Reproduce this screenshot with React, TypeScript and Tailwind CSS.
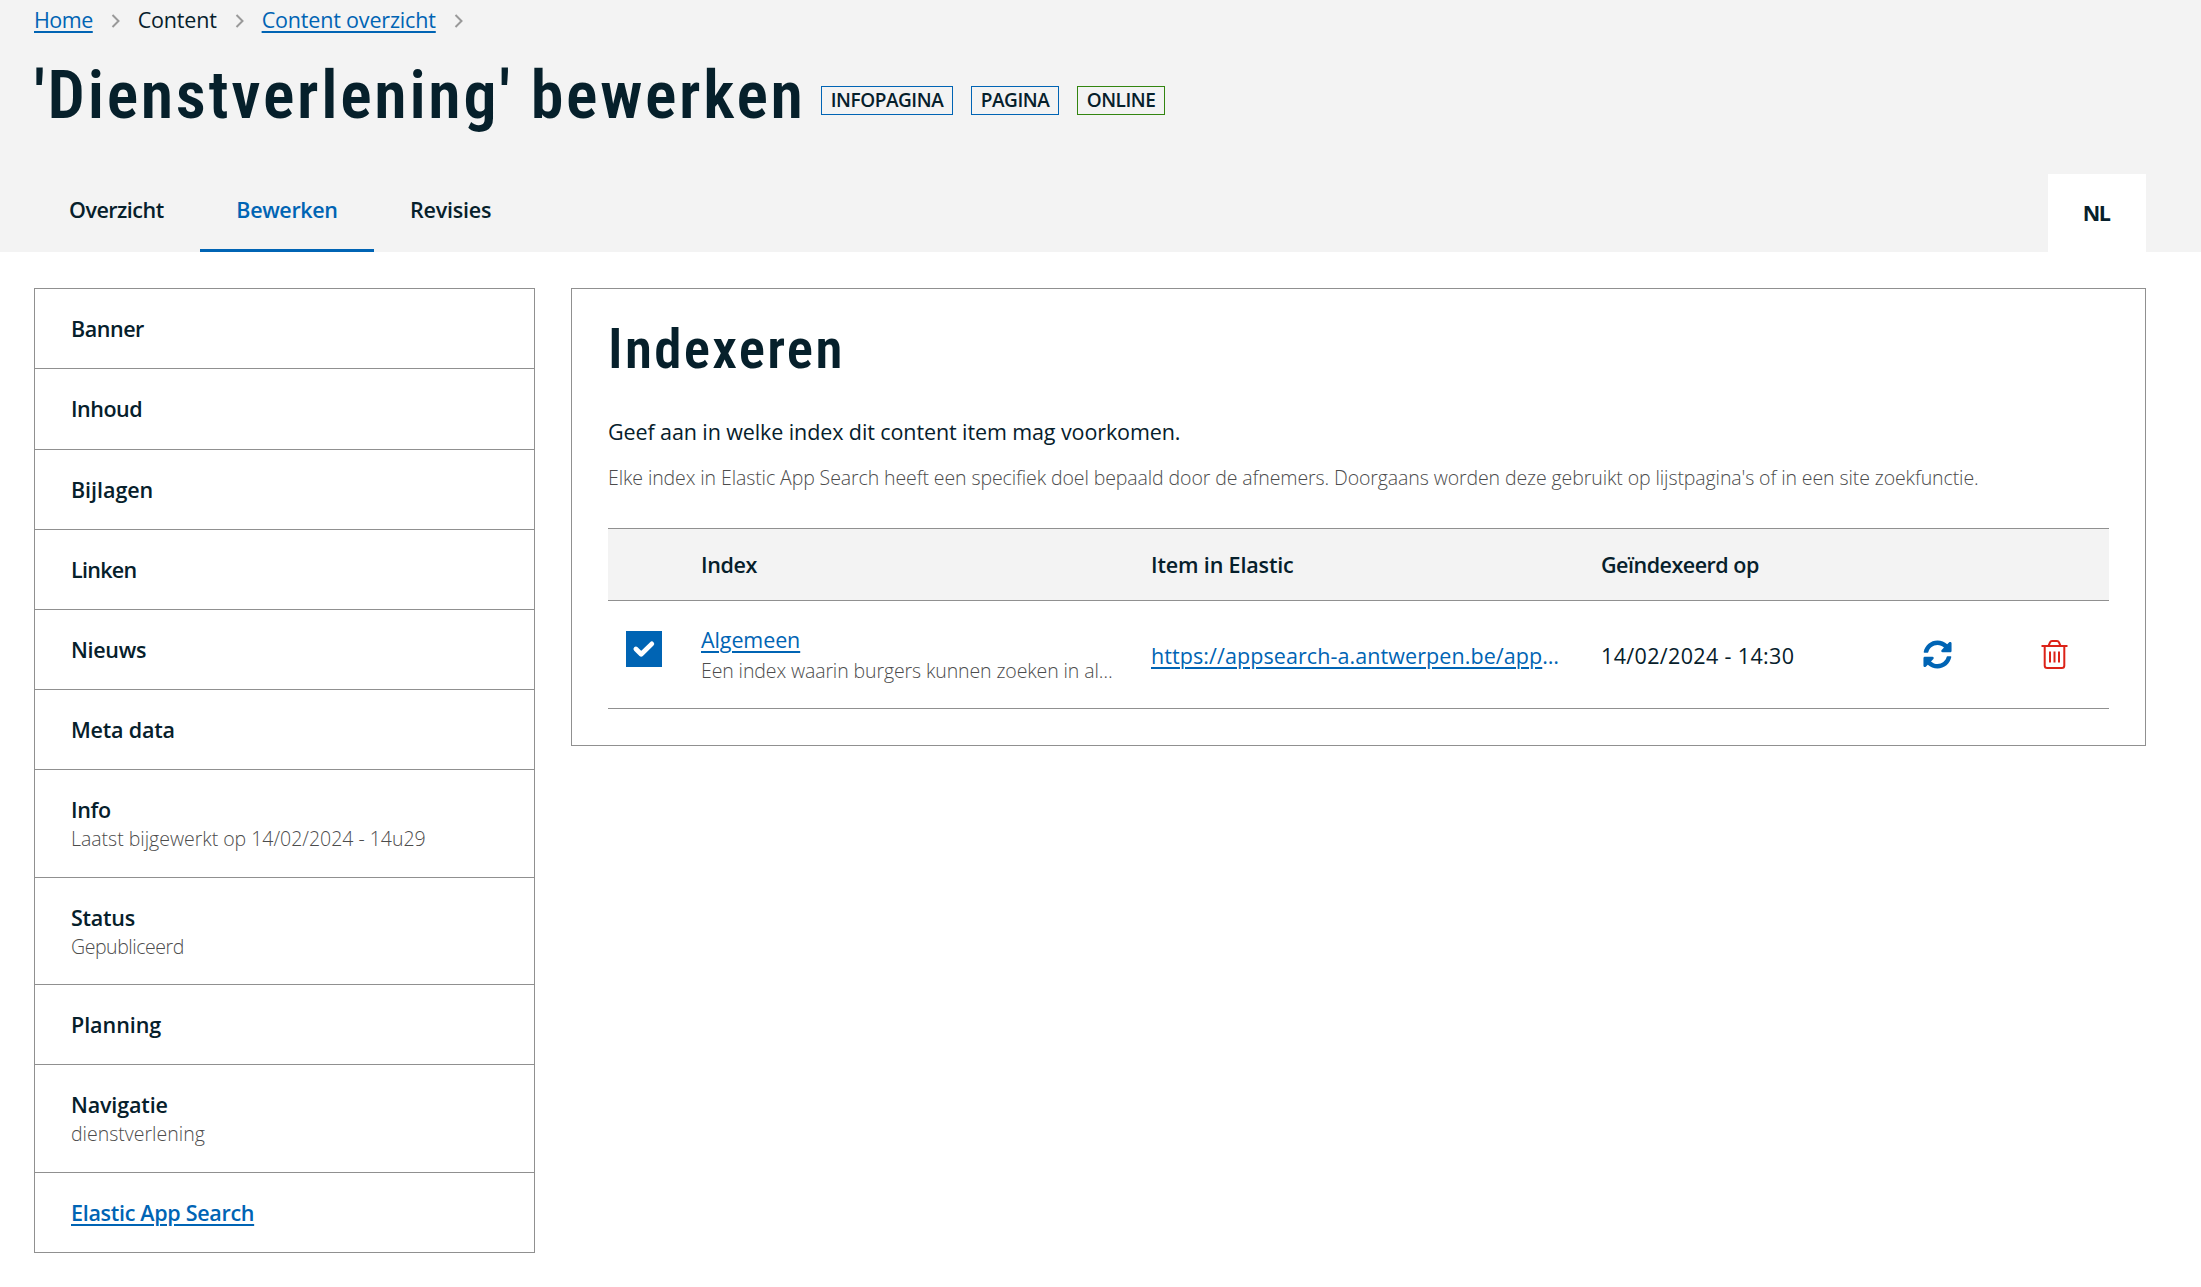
import type { ReactNode } from "react";
import { FaSyncAlt } from "react-icons/fa";

const body = "font-['Open_Sans',sans-serif] text-[21.5px] leading-[30px]";
const strong = "font-['Open_Sans',sans-serif] text-[21.5px] leading-[27px] font-semibold";
const small = "font-['Open_Sans',sans-serif] text-[19.5px] leading-[30px] font-light text-[#4c4c4c]";
const heading = "font-['Roboto',sans-serif] font-semibold whitespace-nowrap [font-stretch:75%]";
const link = "text-[#0064b4] underline decoration-2 underline-offset-[3px]";

function Chevron({ className = "" }: { className?: string }) {
  return (
    <svg className={`mt-[1px] mr-[18px] ml-[18px] h-[14px] w-[9px] ${className}`} viewBox="0 0 9 14" fill="none">
      <path d="M1.5 1L7.5 7L1.5 13" stroke="#999999" strokeWidth="2" />
    </svg>
  );
}

function Breadcrumbs() {
  return (
    <nav className={`flex items-center ${body}`}>
      <a className={`tracking-[-0.5px] ${link}`}>Home</a>
      <Chevron className="ml-[17px]" />
      <span className="tracking-[-0.2px]">Content</span>
      <Chevron className="ml-[17px]" />
      <a className={`tracking-[-0.17px] ${link}`}>Content overzicht</a>
      <Chevron className="ml-[17px]" />
    </nav>
  );
}

function Tag({ children, className }: { children: ReactNode; className: string }) {
  return (
    <span
      className={`h-[29px] border text-center font-['Open_Sans',sans-serif] text-[19px] leading-[26px] font-semibold tracking-[-0.45px] ${className}`}
    >
      {children}
    </span>
  );
}

type Section = { label: string; note?: string; active?: boolean; height: string; tracking: string; noteTracking?: string };

const sections: Section[] = [
  { label: "Banner", height: "h-[80px]", tracking: "tracking-[-0.45px]" },
  { label: "Inhoud", height: "h-[81px]", tracking: "tracking-[-0.5px]" },
  { label: "Bijlagen", height: "h-[80px]", tracking: "tracking-[-0.05px]" },
  { label: "Linken", height: "h-[80px]", tracking: "tracking-[-0.7px]" },
  { label: "Nieuws", height: "h-[80px]", tracking: "tracking-[-0.3px]" },
  { label: "Meta data", height: "h-[80px]", tracking: "tracking-[-0.2px]" },
  {
    label: "Info",
    note: "Laatst bijgewerkt op 14/02/2024 - 14u29",
    height: "h-[108px]",
    tracking: "tracking-[-0.3px]",
    noteTracking: "tracking-[-0.02px]",
  },
  {
    label: "Status",
    note: "Gepubliceerd",
    height: "h-[107px]",
    tracking: "tracking-[-0.25px]",
    noteTracking: "tracking-[-0.45px]",
  },
  { label: "Planning", height: "h-[80px]", tracking: "tracking-[-0.05px]" },
  {
    label: "Navigatie",
    note: "dienstverlening",
    height: "h-[108px]",
    tracking: "tracking-[-0.15px]",
    noteTracking: "tracking-normal",
  },
  { label: "Elastic App Search", active: true, height: "h-[80px]", tracking: "tracking-[-0.3px]" },
];

function Sidebar() {
  return (
    <aside className="w-[501px] shrink-0 border border-b-0 border-[#909090]">
      {sections.map(({ label, note, active, height, tracking, noteTracking }) => (
        <div key={label} className={`border-b border-[#909090] px-[36px] pt-[26px] ${height}`}>
          <div className={`${strong} ${tracking}`}>
            <span className={active ? link : ""}>{label}</span>
          </div>
          {note && <div className={`mt-[1px] ${small} ${noteTracking}`}>{note}</div>}
        </div>
      ))}
    </aside>
  );
}

function TrashIcon() {
  return (
    <svg className="h-[29px] w-[27px]" viewBox="0 0 27 29" fill="none" stroke="#dc2318" strokeWidth="2">
      <path d="M0.5 6H26.5" />
      <path d="M7.5 6L9 2.4Q9.6 1 11 1H16Q17.4 1 18 2.4L19.5 6" />
      <path d="M3.7 6V25.5Q3.7 28 6.2 28H20.8Q23.3 28 23.3 25.5V6" />
      <path d="M9 11.5V22.5M13.5 11.5V22.5M18 11.5V22.5" />
    </svg>
  );
}

const columns = "grid grid-cols-[75px_450px_450px_292px_124px_110px]";

function IndexTable() {
  return (
    <div className="mt-[35px] border-t border-[#909090]">
      <div className={`h-[72px] items-center border-b border-[#909090] bg-[#f3f3f3] ${columns} ${strong}`}>
        <div />
        <div className="px-[18px] tracking-[-0.35px]">Index</div>
        <div className="px-[18px] tracking-[-0.15px]">Item in Elastic</div>
        <div className="px-[18px] tracking-[-0.5px]">Geïndexeerd op</div>
      </div>
      <div className={`h-[108px] items-center border-b border-[#909090] ${columns} ${body}`}>
        <div className="px-[18px]">
          <div className="mb-[11px] flex size-[36px] items-center justify-center bg-[#0064b4]">
            <svg className="h-[18px] w-[24px]" viewBox="0 0 24 18" fill="none">
              <path
                d="M3.9 9L9.2 14.2L19.8 3.9"
                stroke="#fff"
                strokeWidth="4.8"
                strokeLinecap="round"
                strokeLinejoin="round"
              />
            </svg>
          </div>
        </div>
        <div className="px-[18px] pt-[2px] whitespace-nowrap">
          <div>
            <a className={`tracking-[-0.1px] ${link}`}>Algemeen</a>
          </div>
          <div className={`mt-[1px] tracking-[-0.11px] ${small}`}>Een index waarin burgers kunnen zoeken in al…</div>
        </div>
        <div className="px-[18px] pt-[2px] whitespace-nowrap text-[#0064b4]">
          <a className={`tracking-[0.08px] ${link}`}>https://appsearch-a.antwerpen.be/app</a>…
        </div>
        <div className="px-[18px] pt-[2px] tracking-[0.35px]">14/02/2024 - 14:30</div>
        <div className="flex justify-center">
          <FaSyncAlt className="size-[29px] text-[#0064b4]" />
        </div>
        <div className="flex justify-center">
          <TrashIcon />
        </div>
      </div>
    </div>
  );
}

export default function App() {
  return (
    <div className="min-h-screen bg-white text-[#06202b]">
      <header className="h-[252px] bg-[#f3f3f3] pt-[5px] pr-[55px] pl-[34px]">
        <Breadcrumbs />
        <div className="mt-[21px] flex">
          <h1 className={`w-[787px] text-[66px] leading-[80px] tracking-[2.7px] ${heading}`}>
            'Dienstverlening' bewerken
          </h1>
          <div className="mt-[30px] flex gap-[18px]">
            <Tag className="w-[132px] border-[#0064b4]">INFOPAGINA</Tag>
            <Tag className="w-[88px] border-[#0064b4]">PAGINA</Tag>
            <Tag className="w-[88px] border-[#32850f]">ONLINE</Tag>
          </div>
        </div>
        <div className="mt-[38px] flex h-[78px] justify-between">
          <nav className={`flex ${strong}`}>
            <a className="w-[166px] pt-[22px] pl-[35px] tracking-[-0.5px]">Overzicht</a>
            <a className="w-[174px] border-b-3 border-[#0064b4] pt-[22px] text-center tracking-[-0.35px] text-[#0064b4]">
              Bewerken
            </a>
            <a className="pt-[22px] pl-[36px] tracking-[-0.2px]">Revisies</a>
          </nav>
          <div className="w-[98px] bg-white pt-[25px] pr-[2px] text-center font-['Open_Sans',sans-serif] text-[21.5px] leading-[27px] font-bold tracking-[-1.5px]">
            NL
          </div>
        </div>
      </header>
      <main className="flex items-start gap-[36px] pt-[36px] pr-[55px] pl-[34px]">
        <Sidebar />
        <section className="flex-1 border border-[#909090] p-[36px]">
          <h2 className={`text-[55px] leading-[48px] tracking-[2.3px] ${heading}`}>Indexeren</h2>
          <p className={`mt-[44px] tracking-[-0.1px] ${body}`}>
            Geef aan in welke index dit content item mag voorkomen.
          </p>
          <p className={`mt-[16px] tracking-[-0.1px] whitespace-nowrap ${small}`}>
            Elke index in Elastic App Search heeft een specifiek doel bepaald door de afnemers. Doorgaans worden deze
            gebruikt op lijstpagina's of in een site zoekfunctie.
          </p>
          <IndexTable />
        </section>
      </main>
    </div>
  );
}
